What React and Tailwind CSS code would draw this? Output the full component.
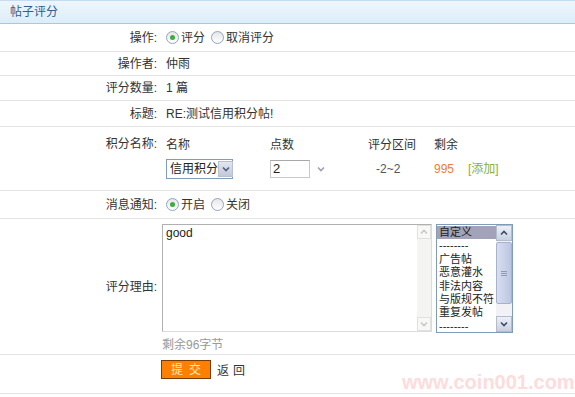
import React from 'react';

const font = { fontFamily: '"Liberation Sans", "Noto Sans CJK SC", sans-serif' };

function Radio({ checked }) {
  return (
    <span className="inline-flex w-[13px] h-[13px] rounded-full border border-[#8ea6c0] bg-gradient-to-b from-[#e6e6e6] to-white items-center justify-center mr-[2px]">
      {checked && <span className="w-[5px] h-[5px] rounded-full bg-[#3cac3c]" />}
    </span>
  );
}

function Chevron({ className, color = '#4d6185' }) {
  return (
    <svg width="8" height="6" viewBox="0 0 8 6" className={className}>
      <path d="M1 1.5 L4 4.5 L7 1.5" fill="none" stroke={color} strokeWidth="1.6" />
    </svg>
  );
}

function ChevronUp({ color = '#4d6185' }) {
  return (
    <svg width="8" height="6" viewBox="0 0 8 6">
      <path d="M1 4.5 L4 1.5 L7 4.5" fill="none" stroke={color} strokeWidth="1.6" />
    </svg>
  );
}

function Row({ label, h, children }) {
  return (
    <div className={`flex ${h} border-b border-[#e3e3e3] items-center`}>
      <div className="w-[158px] shrink-0 text-right pr-[1px]">{label}</div>
      <div className="pl-[8px] flex-1">{children}</div>
    </div>
  );
}

const reasons = ['自定义', '--------', '广告帖', '恶意灌水', '非法内容', '与版规不符', '重复发帖', '--------'];

export default function App() {
  return (
    <div className="relative w-[575px] h-[397px] bg-white text-[12px] text-[#333] overflow-hidden" style={font}>
      <div className="h-[24px] border-t border-[#c6dcee] border-b border-b-[#a9c8e0] bg-gradient-to-b from-[#eef6fc] to-[#dcedf9] flex items-center pl-[10px] text-[#2e5f8e]">
        帖子评分
      </div>

      <Row label="操作:" h="h-[28px]">
        <div className="flex items-center">
          <Radio checked />
          <span>评分</span>
          <span className="ml-[6px]" />
          <Radio />
          <span>取消评分</span>
        </div>
      </Row>
      <Row label="操作者:" h="h-[24px]">仲雨</Row>
      <Row label="评分数量:" h="h-[25px]">1 篇</Row>
      <Row label="标题:" h="h-[26px]">RE:测试信用积分帖!</Row>

      <div className="flex h-[64px] border-b border-[#e3e3e3]">
        <div className="w-[158px] shrink-0 text-right pr-[1px] pt-[8px]">积分名称:</div>
        <div className="pl-[8px] flex-1">
          <div className="flex pt-[9px] h-[32px]">
            <span className="w-[104px]">名称</span>
            <span className="w-[98px]">点数</span>
            <span className="w-[66px]">评分区间</span>
            <span>剩余</span>
          </div>
          <div className="flex items-center">
            <div className="w-[104px]">
              <div className="w-[67px] h-[20px] border border-[#7f9db9] flex items-center bg-white">
                <span className="flex-1 pl-[3px] text-[12px] text-[#222] whitespace-nowrap">信用积分</span>
                <span className="w-[15px] h-[16px] mr-[1px] shrink-0 bg-gradient-to-b from-[#e3e6ee] to-[#c2c8d8] border border-[#b8c0d0] flex items-center justify-center">
                  <Chevron />
                </span>
              </div>
            </div>
            <div className="w-[98px] flex items-center">
              <div className="w-[40px] h-[18px] border border-[#c8c8c8] border-t-[#a8a8a8] pl-[2px] leading-[16px] text-[13px] text-[#222]">2</div>
              <Chevron className="ml-[7px]" color="#9aa3b3" />
            </div>
            <span className="w-[66px] pl-[8px] text-[#555]">-2~2</span>
            <span className="w-[34px] text-[#f27a3a]">995</span>
            <span className="text-[#8aaf3a]">[添加]</span>
          </div>
        </div>
      </div>

      <Row label="消息通知:" h="h-[28px]">
        <div className="flex items-center">
          <Radio checked />
          <span>开启</span>
          <span className="ml-[6px]" />
          <Radio />
          <span>关闭</span>
        </div>
      </Row>

      <div className="flex h-[136px] border-b border-[#e3e3e3]">
        <div className="w-[158px] shrink-0 text-right pr-[1px] pt-[59px]">评分理由:</div>
        <div className="pl-[4px] pt-[5px] flex-1">
          <div className="flex gap-[4px]">
            <div className="w-[270px] h-[108px] border border-[#b0b0b0] border-r-[#dcdcdc] border-b-[#dcdcdc] flex">
              <div className="flex-1 pl-[3px] pt-[1px] leading-[14px] text-[12px] text-[#222]">good</div>
              <div className="w-[14px] bg-[#f4f4f2] flex flex-col justify-between">
                <div className="h-[14px] border border-[#e0e0dc] flex items-center justify-center bg-[#f8f8f6]">
                  <ChevronUp color="#c8c8c8" />
                </div>
                <div className="h-[14px] border border-[#e0e0dc] flex items-center justify-center bg-[#f8f8f6]">
                  <Chevron color="#c8c8c8" />
                </div>
              </div>
            </div>
            <div className="w-[77px] h-[109px] border border-[#7f9db9] flex bg-white">
              <div className="flex-1 text-[11px] leading-[13.4px] text-[#222] pt-[1px] overflow-hidden">
                {reasons.map((r, i) => (
                  <div key={i} className={`pl-[2px] whitespace-nowrap ${i === 0 ? 'bg-[#a2a2b8]' : ''}`}>{r}</div>
                ))}
              </div>
              <div className="w-[16px] shrink-0 bg-[#f2f2f6] flex flex-col">
                <div className="h-[16px] bg-gradient-to-b from-[#eef0f6] to-[#c8d0e2] border border-[#b4bccc] flex items-center justify-center">
                  <ChevronUp color="#3b4b6b" />
                </div>
                <div className="h-[62px] mt-[1px] bg-gradient-to-r from-[#d8def0] to-[#bcc6e0] border border-[#a8b2cc] rounded-[2px] flex items-center justify-center">
                  <div className="flex flex-col gap-[1px]">
                    <span className="w-[6px] h-px bg-[#8e9ab8]" />
                    <span className="w-[6px] h-px bg-[#8e9ab8]" />
                    <span className="w-[6px] h-px bg-[#8e9ab8]" />
                  </div>
                </div>
                <div className="flex-1" />
                <div className="h-[16px] bg-gradient-to-b from-[#eef0f6] to-[#c8d0e2] border border-[#b4bccc] flex items-center justify-center">
                  <Chevron color="#3b4b6b" />
                </div>
              </div>
            </div>
          </div>
          <div className="mt-[3px] text-[#999]">剩余96字节</div>
        </div>
      </div>

      <div className="flex h-[39px] border-b border-[#e3e3e3]">
        <div className="w-[158px] shrink-0" />
        <div className="pl-[3px] pt-[5px] flex items-start">
          <button className="w-[50px] h-[19px] bg-[#ff8000] border border-[#7a3a00] text-[#ffe7b8] text-[12px] leading-[16px] tracking-[6px] pl-[6px]">提交</button>
          <span className="ml-[6px] mt-[2px] tracking-[4px]">返回</span>
        </div>
      </div>

      <div className="absolute left-[402px] top-[371px] text-[20px] leading-[22px] font-bold text-[#fcdcdc] pointer-events-none" style={{ fontFamily: '"Liberation Sans", sans-serif' }}>
        www.coin001.com
      </div>
    </div>
  );
}
